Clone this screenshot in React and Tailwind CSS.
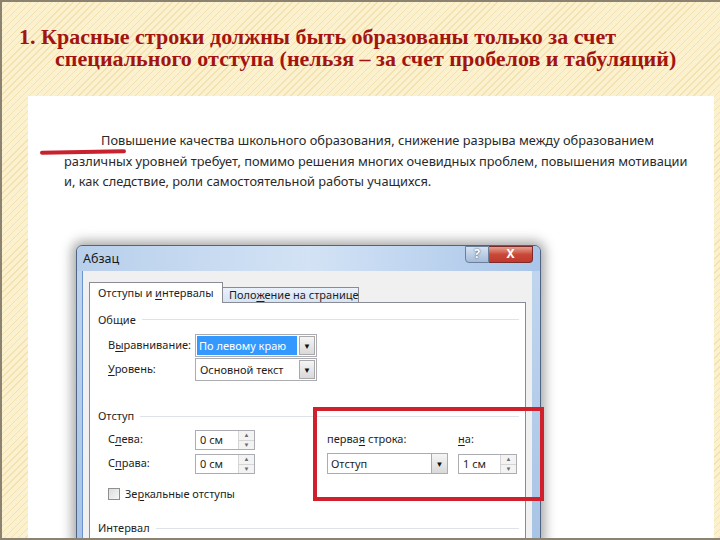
import React from "react";

const U = ({ children }) => <span className="underline underline-offset-2">{children}</span>;

const SpinBox = ({ value, width = "w-[60px]" }) => (
  <div className={`${width} h-[20px] flex items-stretch border border-[#abadb3] bg-white`}>
    <span className="flex-1 pl-[4px] leading-[18px]">{value}</span>
    <div className="w-[16px] flex flex-col border-l border-[#d5d5d5] bg-[#f3f3f3]">
      <div className="flex-1 flex items-center justify-center border-b border-[#d5d5d5] text-[6px] text-[#6a6a6a]">▲</div>
      <div className="flex-1 flex items-center justify-center text-[6px] text-[#6a6a6a]">▼</div>
    </div>
  </div>
);

const DropDown = ({ children, width, highlight }) => (
  <div className={`${width} h-[23px] flex items-stretch border border-[#abadb3] bg-white p-[1px]`}>
    <span
      className={`flex-1 pl-[2px] leading-[19px] whitespace-nowrap ${
        highlight ? "bg-[#3399ff] text-white mr-[2px]" : "pl-[3px]"
      }`}
    >
      {children}
    </span>
    <div className="w-[16px] flex items-center justify-center border border-[#a9a9a9] bg-gradient-to-b from-[#f5f5f5] to-[#d9d9d9] text-[8px] text-[#111]">
      ▼
    </div>
  </div>
);

const GroupTitle = ({ children }) => (
  <div className="flex items-center gap-[6px] pr-[6px]">
    <span>{children}</span>
    <div className="flex-1 h-px bg-[#dde3e8]" />
  </div>
);

const Dialog = () => (
  <div className="ml-[48px] w-[465px] rounded-t-[6px] border border-[#4f6482] bg-gradient-to-b from-[#c2d7ef] to-[#a8c4e6] shadow-[0_0_12px_4px_rgba(0,0,0,0.35)]">
    <div className="h-[25px] flex items-center justify-between pl-[6px] pr-[7px] bg-gradient-to-r from-[#b8cfeb] via-[#d3e3f5] to-[#a9c5e9] rounded-t-[6px]">
      <span className="text-[12.5px] text-[#1a1a1a] mt-[2px]">Абзац</span>
      <div className="self-start flex">
        <div className="w-[24px] h-[17px] flex items-center justify-center rounded-bl-[4px] border border-[#6b7f9b] bg-gradient-to-b from-[#d6e3f2] to-[#a4bbd8] text-[12px] font-bold text-white [text-shadow:0_0_2px_#334]">
          ?
        </div>
        <div className="w-[44px] h-[17px] flex items-center justify-center rounded-br-[4px] border border-l-0 border-[#7a2a2a] bg-gradient-to-b from-[#e3a08f] via-[#c9483a] to-[#c0392b] text-[12px] font-bold text-white">
          X
        </div>
      </div>
    </div>
    <div className="ml-[5px] mr-[8px] bg-[#f0f0f0] px-[6px] pt-[10px] h-[270px] border-l border-l-[#6b93cf]">
      <div className="flex items-end whitespace-nowrap">
        <div className="w-[134px] h-[21px] leading-[20px] pl-[8px] bg-white border border-b-0 border-[#898c95] relative top-px z-10">
          Отступы и <U>и</U>нтервалы
        </div>
        <div className="w-[136px] h-[15px] leading-[14px] pl-[6px] bg-gradient-to-b from-[#eaf1fa] to-[#d6e4f4] border border-l-0 border-b-0 border-[#898c95]">
          Поло<U>ж</U>ение на странице
        </div>
      </div>
      <div className="h-[240px] bg-white border border-[#898c95] pl-[8px] pt-[9px]">
        <GroupTitle>Общие</GroupTitle>
        <div className="pl-[10px] mt-[6px] flex flex-col gap-[1px]">
          <div className="flex items-center">
            <span className="w-[87px]">В<U>ы</U>равнивание:</span>
            <DropDown width="w-[122px]" highlight>По левому краю</DropDown>
          </div>
          <div className="flex items-center">
            <span className="w-[87px]"><U>У</U>ровень:</span>
            <DropDown width="w-[122px]">Основной текст</DropDown>
          </div>
        </div>
        <div className="mt-[27px]">
          <GroupTitle>Отступ</GroupTitle>
        </div>
        <div className="pl-[10px] mt-[5px] flex flex-col gap-[4px]">
          <div className="flex items-center h-[20px]">
            <span className="w-[87px]">С<U>л</U>ева:</span>
            <SpinBox value="0 см" />
            <span className="ml-[72px] w-[131px]">перва<U>я</U> строка:</span>
            <span><U>н</U>а:</span>
          </div>
          <div className="flex items-center h-[20px]">
            <span className="w-[87px]">С<U>п</U>рава:</span>
            <SpinBox value="0 см" />
            <div className="ml-[72px] w-[121px] h-[21px] flex items-stretch border border-[#abadb3] bg-white">
              <span className="flex-1 pl-[3px] leading-[19px]">Отступ</span>
              <div className="w-[16px] flex items-center justify-center border-l border-[#a9a9a9] bg-gradient-to-b from-[#f5f5f5] to-[#d9d9d9] text-[8px] text-[#111]">▼</div>
            </div>
            <div className="ml-[10px]">
              <SpinBox value="1 см" width="w-[59px]" />
            </div>
          </div>
          <div className="flex items-center gap-[5px] mt-[8px]">
            <div className="w-[12px] h-[12px] border border-[#8f8f8f] bg-gradient-to-br from-[#dcdcdc] to-[#f7f7f7]" />
            <span>Зе<U>р</U>кальные отступы</span>
          </div>
        </div>
        <div className="mt-[18px]">
          <GroupTitle>Интервал</GroupTitle>
        </div>
      </div>
    </div>
  </div>
);

export default function App() {
  return (
    <div className="relative w-[720px] h-[540px] overflow-hidden border-2 border-r-0 border-[#8c8272] bg-[#fcf1cf] bg-[repeating-linear-gradient(135deg,#f3e1b0_0px,#f3e1b0_1px,transparent_1px,transparent_5px)]">
      <div className="flex flex-col h-full">
        <h1 className="pt-[24px] pl-[53px] -indent-[36px] pr-[10px] font-['Liberation_Serif',serif] font-bold text-[22px] leading-[22px] text-[#a3140f]">
          1. Красные строки должны быть образованы только за счет специального отступа (нельзя – за счет пробелов и табуляций)
        </h1>
        <div className="ml-[38px] mt-[11px] h-[2px] bg-[#e0b254]" />
        <div className="flex-1 flex pt-[15px] pl-[26px] pr-[6px] pb-[5px]">
          <div className="relative flex-1 bg-white overflow-hidden">
            <p className="mt-[34px] ml-[36px] mr-[18px] indent-[37px] font-['Noto_Sans',sans-serif] text-[12.8px] leading-[20.5px] text-[#2a2a2a]">
              Повышение качества школьного образования, снижение разрыва между образованием различных уровней требует, помимо решения многих очевидных проблем, повышения мотивации и, как следствие, роли самостоятельной работы учащихся.
            </p>
            <div className="absolute left-[12px] top-[54px] w-[86px] h-[4px] rounded-full bg-[#c8222e] -rotate-1" />
            <div className="mt-[53px] font-['Noto_Sans',sans-serif] text-[11px] text-[#1e1e1e]">
              <Dialog />
            </div>
            <div className="absolute left-[285px] top-[311px] w-[231px] h-[94px] border-4 border-[#d0202c]" />
          </div>
        </div>
      </div>
    </div>
  );
}
